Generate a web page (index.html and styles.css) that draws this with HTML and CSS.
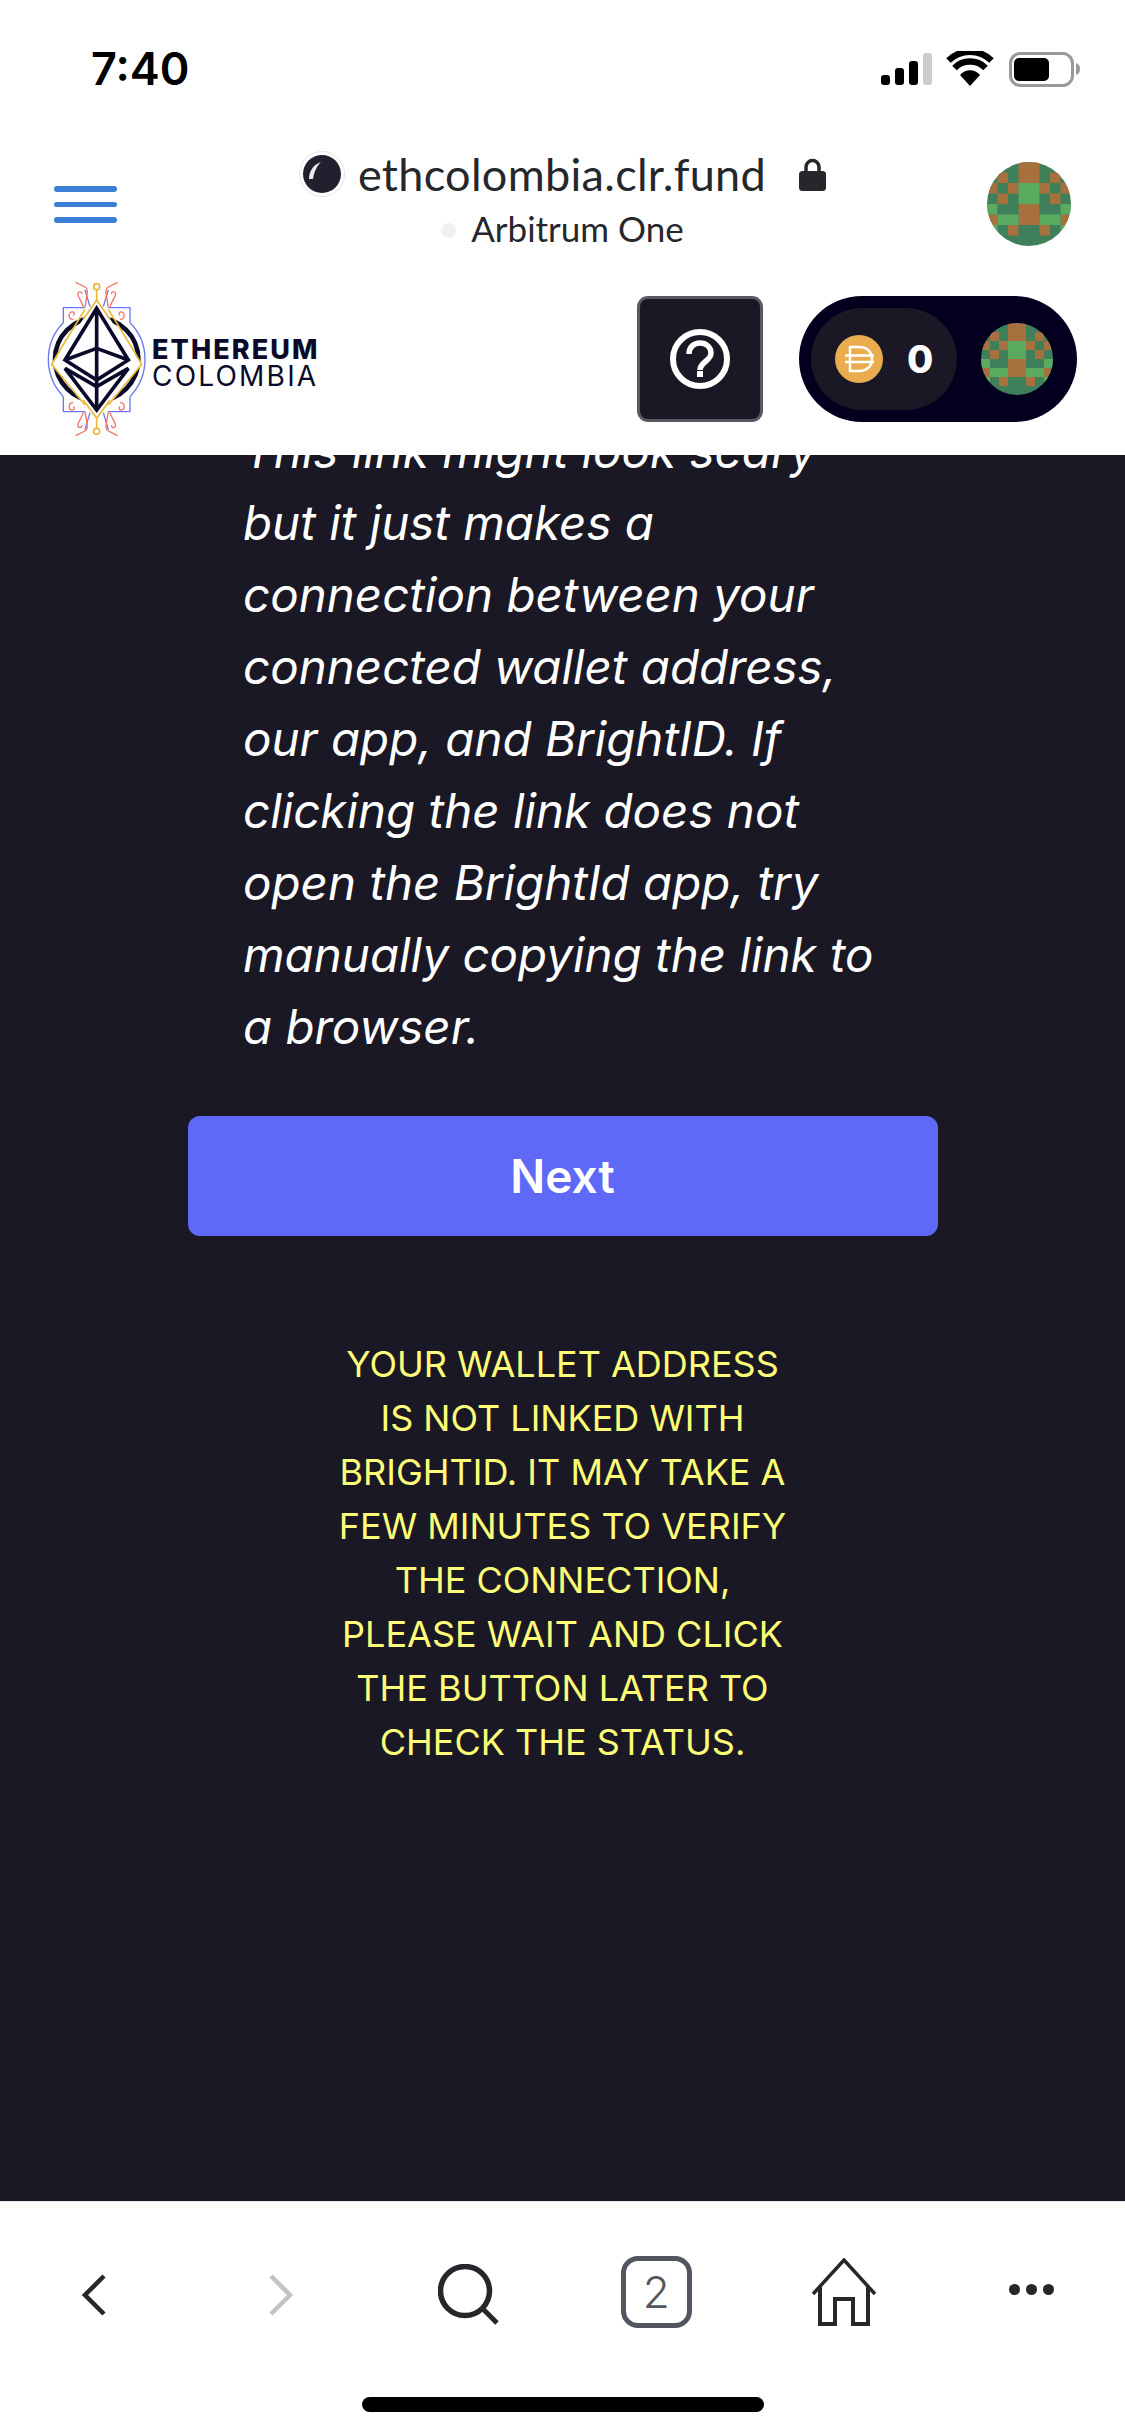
FILE: index.html
```html
<!DOCTYPE html>
<html lang="en">
<head>
<meta charset="utf-8">
<title>ethcolombia.clr.fund</title>
<link rel="stylesheet" href="styles.css">
</head>
<body>
<svg class="defs" width="0" height="0" aria-hidden="true">
  <defs>
    <clipPath id="avatar-clip"><circle cx="4" cy="4" r="4"/></clipPath>
    <symbol id="avatar" viewBox="0 0 8 8">
      <g clip-path="url(#avatar-clip)">
        <rect width="8" height="8" fill="#3f7f5a"/>
        <path fill="#a6713f" d="M3 0h2v2h-2zM1 1h1v1h-1zM6 1h1v1h-1zM0 2h1v1h-1zM2 2h1v1h-1zM5 2h1v1h-1zM7 2h1v1h-1zM1 3h1v1h-1zM6 3h1v1h-1zM3 4h2v2h-2zM0 5h1v1h-1zM7 5h1v1h-1zM2 6h1v1h-1zM5 6h1v1h-1zM0 7h1v1h-1zM7 7h1v1h-1z"/>
        <path fill="#5aab60" d="M3 2h2v2h-2zM0 4h1v1h-1zM7 4h1v1h-1zM1 5h2v1h-2zM5 5h2v1h-2zM0 6h1v1h-1zM7 6h1v1h-1z"/>
      </g>
    </symbol>
  </defs>
</svg>

<div class="phone">
  <header class="status">
    <span class="time">7:40</span>
    <svg class="status-icons" width="202" height="36" viewBox="880 51 202 36">
      <rect x="882" y="75" width="9" height="10" rx="3" fill="#000"/>
      <rect x="896" y="68" width="9" height="17" rx="3" fill="#000"/>
      <rect x="910" y="61" width="9" height="24" rx="3" fill="#000"/>
      <rect x="924" y="53" width="9" height="32" rx="3" fill="#ccc"/>
      <path d="M971 86 961 75a13 13 0 0 1 20 0z" fill="#000"/>
      <path d="M955.500 68a22 22 0 0 1 31 0" fill="none" stroke="#000" stroke-width="6.500"/>
      <path d="M949.500 60.500a31 31 0 0 1 43 0" fill="none" stroke="#000" stroke-width="6.500"/>
      <rect x="1011.500" y="53.500" width="62" height="32" rx="10" fill="none" stroke="#999" stroke-width="3"/>
      <rect x="1015" y="58" width="35" height="23" rx="5" fill="#000"/>
      <path d="M1077 63c3 1 4 3 4 6s-1 5-4 6z" fill="#999"/>
    </svg>
  </header>

  <nav class="browser-bar">
    <div class="burger"><span></span><span></span><span></span></div>
    <div class="address">
      <div class="address-top">
        <svg class="favicon" width="46" height="48" viewBox="0 0 46 48">
          <circle cx="23" cy="24" r="22.500" fill="#fff" stroke="#e6e6ea" stroke-width="1"/>
          <circle cx="23" cy="24" r="19" fill="#20202e"/>
          <path d="M10 29c0-8 4-14 12-17-4 4-7 10-8 17z" fill="#e8e8ee"/>
        </svg>
        <span class="domain">ethcolombia.clr.fund</span>
        <svg class="lock" width="27" height="33" viewBox="0 0 27 33">
          <path d="M7 14V9a6.500 6.500 0 0 1 13 0v5" fill="none" stroke="#26272b" stroke-width="3.500"/>
          <rect y="13" width="27" height="20" rx="3.500" fill="#26272b"/>
        </svg>
      </div>
      <div class="address-net"><i class="net-dot"></i><span>Arbitrum One</span></div>
    </div>
    <svg class="avatar-lg"><use href="#avatar"/></svg>
  </nav>

  <section class="site-header">
    <div class="logo">
      <svg class="logo-mark" width="120" height="170" viewBox="0 0 360 510" fill="none">
        <g stroke="#6b78ee" stroke-width="4">
          <path d="M165 113H100v45M235 113h65v45M165 425H100v-45M235 425h65v-45"/>
          <path d="M100 158C68 190 55 230 55 268s13 78 45 112M300 158c32 32 45 72 45 110s-13 78-45 112"/>
          <path d="M165 60l15 50M235 60l-15 50M165 478l15-50M235 478l-15-50"/>
        </g>
        <circle cx="200" cy="268" r="125" stroke="#0b0a2a" stroke-width="14"/>
        <path d="M200 90 335 283 200 445 65 283z" fill="#fff"/>
        <g stroke="#f0756b" stroke-width="4">
          <path d="M137 37l28 14q10 6 6 22l-6 40M263 37l-28 14q-10 6-6 22l6 40"/>
          <path d="M137 497l28-14q10-6 6-22l-6-36M263 497l-28-14q-10-6-6-22l6-36"/>
          <path d="M160 110c-6-16-12-24-16-34-4-12 12-14 12-4M240 110c6-16 12-24 16-34 4-12-12-14-12-4"/>
          <path d="M160 428c-6 16-12 24-16 34-4 12 12 14 12 4M240 428c6 16 12 24 16 34 4 12-12 14-12 4"/>
          <path d="M130 148c-12 2-18-16-6-22 8-2 12 6 6 10M270 148c12 2 18-16 6-22-8-2-12 6-6 10"/>
          <path d="M130 398c-12-2-18 16-6 22 8 2 12-6 6-10M270 398c12-2 18 16 6 22-8 2-12-6-6-10"/>
        </g>
        <g stroke="#e8b93a" stroke-width="5">
          <circle cx="200" cy="50" r="9"/>
          <circle cx="200" cy="484" r="9"/>
          <path d="M200 59v31M200 475v-30"/>
          <path d="M200 90 240 148M200 90 160 148M200 445 240 390M200 445 160 390"/>
          <path d="M165 118 90 240l-25 43 100 122M235 118l75 122 25 43-100 122"/>
        </g>
        <g stroke="#0b0a2a" stroke-width="11" stroke-linejoin="miter">
          <path d="M200 115 295 270 200 330 105 270z"/>
          <path d="M105 270 200 235 295 270"/>
          <path d="M200 115V420"/>
          <path d="M105 295 200 420 295 295 200 350z"/>
        </g>
      </svg>
      <div class="logo-text">
        <span class="logo-top">ETHEREUM</span>
        <span class="logo-bottom">COLOMBIA</span>
      </div>
    </div>
    <div class="site-actions">
      <button class="help" type="button" aria-label="Help">
        <svg width="60" height="60" viewBox="0 0 60 60" fill="none">
          <circle cx="30" cy="30" r="27" stroke="#fff" stroke-width="6"/>
          <path d="M19 25c0-7 5-11 11-11s11 4 11 10c0 8-11 9-11 17" stroke="#fff" stroke-width="5.500"/>
          <rect x="27" y="42" width="6" height="6" fill="#fff"/>
        </svg>
      </button>
      <div class="wallet">
        <div class="balance">
          <svg class="dai" width="48" height="48" viewBox="0 0 48 48" fill="none">
            <circle cx="24" cy="24" r="24" fill="#e9ad4f"/>
            <path d="M15 12h9c8 0 13 5 13 12s-5 12-13 12h-9zM10 20.500h29M10 27h29" stroke="#fff" stroke-width="2.500"/>
          </svg>
          <span class="balance-value">0</span>
        </div>
        <svg class="avatar-sm"><use href="#avatar"/></svg>
      </div>
    </div>
  </section>

  <main class="content">
    <p class="note">This link might look scary but it just makes a connection between your connected wallet address, our app, and BrightID. If clicking the link does not open the BrightId app, try manually copying the link to a browser.</p>
    <button class="next" type="button">Next</button>
    <p class="warning">YOUR WALLET ADDRESS IS NOT LINKED WITH BRIGHTID. IT MAY TAKE A FEW MINUTES TO VERIFY THE CONNECTION, PLEASE WAIT AND CLICK THE BUTTON LATER TO CHECK THE STATUS.</p>
  </main>

  <footer class="toolbar">
    <div class="tools">
      <svg class="tool tool-low" width="24" height="42" viewBox="0 0 24 42" fill="none"><path d="M22 2 3 21l19 19" stroke="#26272b" stroke-width="4.500"/></svg>
      <svg class="tool tool-low" width="24" height="42" viewBox="0 0 24 42" fill="none"><path d="M2 2l19 19L2 40" stroke="#c0c3c7" stroke-width="4.500"/></svg>
      <svg class="tool tool-low" width="62" height="62" viewBox="0 0 62 62" fill="none"><circle cx="27" cy="27" r="24.500" stroke="#26272b" stroke-width="5.500"/><path d="M45 45l14 14" stroke="#26272b" stroke-width="5"/></svg>
      <div class="tabs">2</div>
      <svg class="tool" width="66" height="68" viewBox="0 0 66 68" fill="none" stroke="#26272b" stroke-width="3.500"><path d="M2 36 33 2l31 34"/><path d="M9 29v37h15V41h18v25h15V29" stroke-width="4"/></svg>
      <div class="more"><i></i><i></i><i></i></div>
    </div>
    <div class="home-indicator"></div>
  </footer>
</div>
</body>
</html>
```
FILE: styles.css
```css
* { box-sizing: border-box; }
html, body { margin: 0; padding: 0; background: #fff; }
.defs { position: absolute; }
.phone {
  width: 1125px;
  height: 2436px;
  display: flex;
  flex-direction: column;
  overflow: hidden;
  font-family: Inter, "Liberation Sans", sans-serif;
}

.status {
  height: 120px;
  flex: none;
  display: flex;
  justify-content: space-between;
  align-items: flex-start;
  padding: 51px 44px 0 91px;
}
.time { font-size: 45px; line-height: 36px; font-weight: 600; color: #000; }
.status-icons { display: block; }

.browser-bar {
  height: 135px;
  flex: none;
  display: grid;
  grid-template-columns: 1fr auto 1fr;
  align-items: start;
  padding: 0 54px;
}
.burger { display: flex; flex-direction: column; gap: 10px; width: 63px; margin-top: 66px; }
.burger span { display: block; height: 5.500px; border-radius: 3px; background: #3a7fd5; }
.address { display: flex; flex-direction: column; align-items: center; padding-top: 30px; }
.address-top { display: flex; align-items: center; height: 48px; }
.favicon { display: block; margin-right: 13px; }
.domain { font-family: Lato, sans-serif; font-size: 45px; line-height: 48px; color: #26272b; letter-spacing: 0.3px; }
.lock { display: block; margin-left: 33px; }
.address-net { display: flex; align-items: center; margin-top: 13px; height: 34px; }
.net-dot { width: 15px; height: 15px; border-radius: 50%; background: #f0f0f2; margin-right: 15px; margin-top: 4px; }
.address-net span { font-family: Lato, sans-serif; font-size: 35px; line-height: 34px; color: #26272b; }
.avatar-lg { width: 84px; height: 84px; justify-self: end; margin-top: 42px; display: block; }

.site-header {
  height: 200px;
  flex: none;
  display: flex;
  justify-content: space-between;
  align-items: flex-start;
  padding: 41px 48px 0 30px;
}
.logo { display: flex; align-items: flex-start; margin-top: -26px; }
.logo-mark { display: block; flex: none; }
.logo-text { display: flex; flex-direction: column; margin: 67px 0 0 2px; color: #0b0a2a; white-space: nowrap; }
.logo-top { font-size: 27px; line-height: 26px; font-weight: 800; letter-spacing: 2.1px; }
.logo-bottom { font-size: 28px; line-height: 26px; font-weight: 400; letter-spacing: 2.2px; }
.site-actions { display: flex; gap: 36px; }
.help {
  width: 126px;
  height: 126px;
  padding: 0;
  border: 3px solid #5a5863;
  border-radius: 11px;
  background: #1a1824;
  display: flex;
  align-items: center;
  justify-content: center;
}
.wallet {
  width: 278px;
  height: 126px;
  border-radius: 63px;
  background: #03001f;
  display: flex;
  align-items: center;
  padding-left: 12px;
}
.balance {
  width: 146px;
  height: 102px;
  border-radius: 51px;
  background: #1a1824;
  display: flex;
  align-items: center;
  padding-left: 24px;
}
.dai { display: block; flex: none; }
.balance-value { color: #fff; font-size: 38px; font-weight: 800; margin-left: 24px; }
.avatar-sm { width: 72px; height: 72px; margin-left: 24px; display: block; }

.content {
  flex: 1;
  min-height: 0;
  overflow: hidden;
  background: #1a1824;
  display: flex;
  flex-direction: column;
  align-items: center;
}
.note {
  width: 640px;
  margin: -40px 0 0 243px;
  align-self: flex-start;
  flex: none;
  font-size: 47.500px;
  line-height: 72px;
  font-style: italic;
  color: #fff;
}
.next {
  width: 750px;
  height: 120px;
  flex: none;
  margin-top: 53px;
  border: 0;
  border-radius: 12px;
  background: #5e69f7;
  color: #fff;
  font-family: inherit;
  font-size: 46px;
  font-weight: 600;
}
.warning {
  width: 460px;
  margin: 101px 0 0;
  flex: none;
  text-align: center;
  font-size: 36px;
  line-height: 54px;
  color: #fdfd78;
}

.toolbar {
  height: 235px;
  flex: none;
  border-top: 1px solid #e4e4e8;
  background: #fff;
  display: flex;
  flex-direction: column;
}
.tools {
  height: 180px;
  flex: none;
  display: grid;
  grid-template-columns: repeat(6, 1fr);
  justify-items: center;
  align-items: center;
}
.tool { display: block; }
.tool-low { margin-top: 6px; }
.tabs {
  width: 71px;
  height: 72px;
  border: 5px solid #525660;
  border-radius: 17px;
  display: flex;
  align-items: center;
  justify-content: center;
  font-size: 44px;
  font-weight: 300;
  color: #525660;
}
.more { display: flex; gap: 6px; margin-bottom: 6px; }
.more i { width: 11px; height: 11px; border-radius: 50%; background: #26272b; }
.home-indicator {
  width: 402px;
  height: 15px;
  margin: 15px auto 0;
  border-radius: 8px;
  background: #000;
}
```
